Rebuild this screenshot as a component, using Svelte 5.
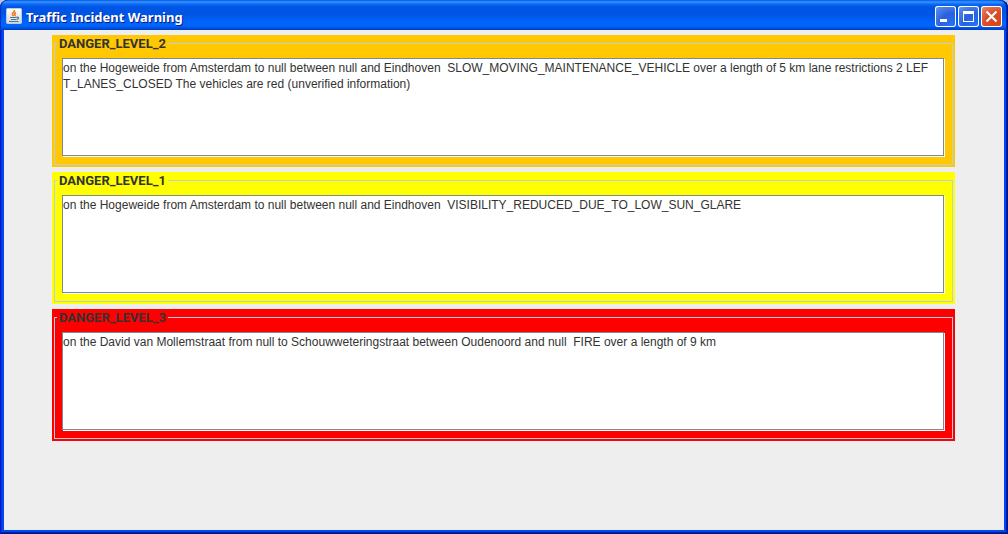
<script>
  const incidents = [
    {
      level: 'DANGER_LEVEL_2',
      tone: 'orange',
      message:
        'on the Hogeweide from Amsterdam to null between null and Eindhoven  SLOW_MOVING_MAINTENANCE_VEHICLE over a length of 5 km lane restrictions 2 LEFT_LANES_CLOSED The vehicles are red (unverified information)'
    },
    {
      level: 'DANGER_LEVEL_1',
      tone: 'yellow',
      message:
        'on the Hogeweide from Amsterdam to null between null and Eindhoven  VISIBILITY_REDUCED_DUE_TO_LOW_SUN_GLARE'
    },
    {
      level: 'DANGER_LEVEL_3',
      tone: 'red',
      message:
        'on the David van Mollemstraat from null to Schouwweteringstraat between Oudenoord and null  FIRE over a length of 9 km'
    }
  ];
</script>

<div class="window">
  <header>
    <svg class="app-icon" width="16" height="16" viewBox="0 0 16 16" aria-hidden="true">
      <defs>
        <linearGradient id="tile" x1="0" y1="0" x2="0" y2="1">
          <stop offset="0" stop-color="#ffffff" />
          <stop offset="1" stop-color="#d3d8da" />
        </linearGradient>
      </defs>
      <rect x=".5" y=".5" width="15" height="15" rx="1" fill="url(#tile)" stroke="#c0cbd8" />
      <path d="M8.500 2c.4 2-2.600 2.500-2.100 4.300.200.700.8 1.200 1 1.900M10 4.500c-1.700.9-1.800 1.500-1 2.400.3.500.1.900-.4 1.300" fill="none" stroke="#ee7a18" stroke-width="1.600" />
      <path d="M4 9.500h6.500M5 11.500h5M3 13.500h9.500" fill="none" stroke="#49779c" stroke-width="1.200" />
      <path d="M10.500 9.200c3-.8 2.500 2-.2 2.300" fill="none" stroke="#49779c" stroke-width="1.200" />
    </svg>
    <h1>Traffic Incident Warning</h1>
    <div class="controls">
      <button type="button" aria-label="Minimize">
        <svg width="21" height="21" viewBox="0 0 21 21"><rect x="5" y="13" width="7" height="3" fill="#fff" /></svg>
      </button>
      <button type="button" aria-label="Maximize">
        <svg width="21" height="21" viewBox="0 0 21 21"><path d="M5 5h11v11H5zM6 8v7h9V8z" fill="#fff" fill-rule="evenodd" /></svg>
      </button>
      <button type="button" class="close" aria-label="Close">
        <svg width="21" height="21" viewBox="0 0 21 21"><path d="M5.500 5.500l10 10M15.500 5.500l-10 10" stroke="#fff" stroke-width="2.200" /></svg>
      </button>
    </div>
  </header>
  <main>
    {#each incidents as incident (incident.level)}
      <section class={incident.tone}>
        <fieldset>
          <legend id={incident.level}>{incident.level}</legend>
          <textarea aria-labelledby={incident.level} spellcheck="false" value={incident.message}></textarea>
        </fieldset>
      </section>
    {/each}
  </main>
</div>

<style>
  :global(body) {
    margin: 0;
    background: #b9c3d6;
  }
  .window {
    box-sizing: border-box;
    min-height: 100vh;
    display: flex;
    flex-direction: column;
    padding: 0 4px 4px;
    border-radius: 8px 8px 0 0;
    background: #0048f1;
    box-shadow: inset 1px 0 #0019cf, inset -1px -1px #00138c, inset -2px -2px #001ea0, inset 2px 0 #0831d9;
    font-family: "Liberation Sans", Arial, sans-serif;
    color: #333;
    overflow: hidden;
  }
  header {
    display: flex;
    align-items: center;
    gap: 4px;
    height: 30px;
    box-sizing: border-box;
    margin: 0 -4px;
    padding: 2px 6px 0;
    background: linear-gradient(#0058e6 0, #3a93ff 2px, #0a6cf5 4px, #0055e5 7px, #0054e3 14px, #0062f8 21px, #0066ff 26px, #0050dd 28px, #003dc4 30px);
    box-shadow: inset 1px 0 #0030cc, inset -1px 0 #00138c, inset -2px 0 #0030b8;
    border-radius: 8px 8px 0 0;
  }
  h1 {
    flex: 1;
    margin: 0;
    padding-top: 2px;
    font: bold 13px/16px "Noto Sans", "Open Sans", sans-serif;
    color: #fff;
    text-shadow: 1px 1px #0a1883;
  }
  .controls {
    display: flex;
    gap: 2px;
  }
  button {
    width: 21px;
    height: 21px;
    padding: 0;
    border: 0;
    border-radius: 3px;
    background: radial-gradient(circle at 80% 90%, #2a70f5, #2860e0 45%, #6c98ee);
    box-shadow: inset 0 0 0 1px #fff;
  }
  button.close {
    background: radial-gradient(circle at 80% 90%, #d84818, #da4a25 50%, #eb9078);
  }
  svg {
    display: block;
  }
  main {
    flex: 1;
    display: flex;
    flex-direction: column;
    gap: 5px;
    padding: 5px 49px 5px 48px;
    background: #eee;
  }
  section {
    padding: 2px;
  }
  .orange {
    background: #ffc800;
  }
  .yellow {
    background: #ff0;
  }
  .red {
    background: #f00;
  }
  fieldset {
    min-width: 0;
    margin: 0;
    padding: 8px 8px 8px 7px;
    border: 1px solid #b8cfe5;
  }
  legend {
    margin-left: -5px;
    padding: 0 2px;
    font: bold 13px/13px Roboto, "Liberation Sans", sans-serif;
  }
  textarea {
    display: block;
    box-sizing: border-box;
    width: 100%;
    height: 98px;
    margin: 0;
    padding: 1px 12px 1px 0;
    border: 1px solid #7a8a99;
    border-radius: 0;
    box-shadow: 1px 1px #fff;
    background: #fff;
    color: #333;
    font: 12px/16px "Liberation Sans", Arial, sans-serif;
    word-break: break-all;
    resize: none;
    outline: 0;
  }
</style>
